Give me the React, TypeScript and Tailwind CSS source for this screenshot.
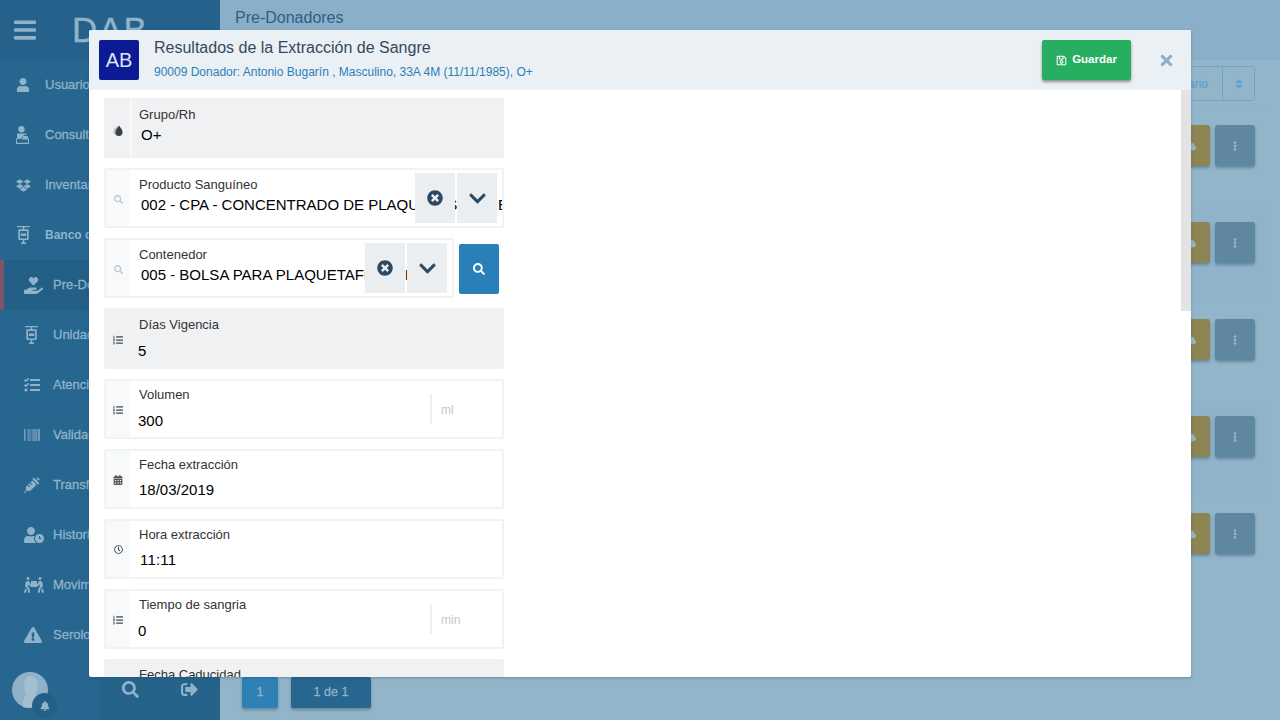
import type { ReactNode } from 'react'
import {
  FaBars, FaUser, FaDropbox, FaHandHoldingHeart, FaTasks, FaBarcode, FaSyringe, FaUserClock,
  FaPeopleCarry, FaExclamationTriangle, FaSearch, FaSignOutAlt, FaBell, FaRegSave, FaTimes,
  FaTimesCircle, FaChevronDown, FaListOl, FaCalendarAlt, FaRegClock, FaSort, FaEllipsisV, FaCloud,
} from 'react-icons/fa'

function IvBag() {
  return (
    <svg className="ml-[1px]" width="13" height="18" viewBox="0 0 13 18" fill="currentColor" aria-hidden="true">
      <path fillRule="evenodd" d="M0 0h13v1.300H7.300v2h3.200c.8 0 1.200.5 1.200 1.200v8.300c0 .7-.4 1.200-1.200 1.200H7.300v2.500H9V18H4v-1.500h1.700V14H2.500c-.8 0-1.200-.5-1.200-1.200V4.500c0-.7.4-1.200 1.200-1.200h3.200v-2H0zM3 5v7.500h7V5zM3.800 7.500h5.400v2.500H3.800z" />
    </svg>
  )
}

function PatientIcon() {
  return (
    <svg width="13" height="18" viewBox="0 0 13 18" fill="currentColor" aria-hidden="true">
      <circle cx="5.500" cy="3.200" r="3.200" />
      <path d="M1.500 7.500h8c.8 0 1.500.5 1.500 1.200H8.500L5.500 11.500v1.500H1V9c0-.8.200-1.500.5-1.500z" />
      <path fillRule="evenodd" d="M0 12.500h1v4.300h11v-4h1V18H0z" />
      <path d="M7 10h4.500l1 3.500H6z" />
    </svg>
  )
}

function BloodDrop() {
  return (
    <svg width="11" height="12" viewBox="0 0 11 12" aria-hidden="true">
      <circle cx="5" cy="6.500" r="4.500" fill="#b9bdc0" />
      <path d="M6 .5c1.200 2 3.500 4.300 3.500 6.800A3.500 3.500 0 0 1 6 11a3.500 3.500 0 0 1-3.500-3.700C2.500 4.800 4.800 2.500 6 .5z" fill="#3a4045" />
    </svg>
  )
}

function Avatar() {
  return (
    <svg width="36" height="36" viewBox="0 0 36 36" aria-hidden="true">
      <circle cx="18" cy="18" r="18" fill="#8fb2c9" />
      <path d="M12 14c0-6 3-10 7-10s7 4 7 10c0 4-2 6-3 8 1 2 3 3 5 4v4a18 18 0 0 1-17 5c0-6 1-11 4-13-2-2-3-5-3-8z" fill="#a3c0d3" />
    </svg>
  )
}

const menu = [
  { icon: <FaUser size={14} />, label: 'Usuarios' },
  { icon: <PatientIcon />, label: 'Consultas' },
  { icon: <FaDropbox size={15} />, label: 'Inventario' },
  { icon: <IvBag />, label: 'Banco de Sangre', bold: true },
  { icon: <FaHandHoldingHeart size={19} />, label: 'Pre-Donadores', sub: true, active: true },
  { icon: <IvBag />, label: 'Unidades', sub: true },
  { icon: <FaTasks size={16} />, label: 'Atención', sub: true },
  { icon: <FaBarcode size={16} />, label: 'Validación', sub: true },
  { icon: <FaSyringe size={16} />, label: 'Transfusión', sub: true },
  { icon: <FaUserClock size={20} />, label: 'Historial', sub: true },
  { icon: <FaPeopleCarry size={20} />, label: 'Movimientos', sub: true },
  { icon: <FaExclamationTriangle size={18} />, label: 'Serología', sub: true },
]

function Sidebar() {
  return (
    <aside className="flex h-full w-[220px] shrink-0 flex-col bg-[#26668f] text-[#8fb3ca]">
      <div className="flex h-[60px] items-center bg-[#25618a] pl-[14px]">
        <FaBars size={22} className="h-[26px] w-[22px]" />
        <span className="ml-[36px] mt-[-2px] text-[35px] font-normal leading-none tracking-[1.5px] [-webkit-text-stroke:0.4px]">DAB</span>
      </div>

      <nav className="flex flex-1 flex-col">
        {menu.map((m) => (
          <div
            key={m.label}
            className={
              m.active
                ? 'flex h-[50px] items-center border-l-4 border-[#7e5568] bg-[#245f85] pl-[20px]'
                : m.sub
                  ? 'flex h-[50px] items-center pl-[24px]'
                  : 'flex h-[50px] items-center pl-[16px]'
            }
          >
            <span className="flex w-[29px] justify-start">{m.icon}</span>
            <span className={m.bold ? 'text-[12px] font-bold' : 'text-[13px] [-webkit-text-stroke:0.3px]'}>{m.label}</span>
          </div>
        ))}
      </nav>

      <div className="relative flex h-[60px] items-center bg-[#25638b]">
        <div className="flex h-full w-[100px] items-center bg-[#26668f] pl-[12px]">
          <Avatar />
        </div>
        <span className="absolute left-[32px] top-[33px] flex h-[25px] w-[25px] items-center justify-center rounded-full bg-[#245f88]">
          <FaBell size={10} />
        </span>
        <FaSearch size={17} className="ml-[22px] mt-[-1px]" />
        <FaSignOutAlt size={17} className="ml-[42px] mt-[-1px]" />
      </div>
    </aside>
  )
}

function Row({ shaded }: { shaded?: boolean }) {
  return (
    <div className={shaded ? 'flex h-[97px] justify-end bg-[#90b3c9] pr-[15px] pt-[15px]' : 'flex h-[97px] justify-end pr-[15px] pt-[15px]'}>
      <div className="flex gap-[5px]">
        <button className="flex h-[41px] w-[40px] items-center justify-center rounded-[3px] bg-[#8c8452] text-[#93b5ca] shadow-[0_2px_3px_rgba(30,70,100,0.4)]">
          <FaCloud size={12} />
        </button>
        <button className="flex h-[41px] w-[40px] items-center justify-center rounded-[3px] bg-[#5f879f] text-[#93b5ca] shadow-[0_2px_3px_rgba(30,70,100,0.4)]">
          <FaEllipsisV size={10} />
        </button>
      </div>
    </div>
  )
}

function Main() {
  return (
    <main className="flex h-full flex-1 flex-col bg-[#93b5ca]">
      <div className="h-[60px] bg-[#8aafc8] pl-[15px] pt-[8px] text-[16px] leading-[19px] text-[#2c5f83]">Pre-Donadores</div>
      <div className="mr-[15px] flex h-[50px] justify-end border-b border-[#8fb1c7] pr-[10px] pt-[6px]">
        <div className="flex h-[35px] items-center rounded-[3px] border border-[#6ea5d0] text-[12px] text-[#639fcf]">
          <span className="px-[14px] [-webkit-text-stroke:0.2px]">Usuario</span>
          <span className="flex h-full w-[32px] items-center justify-center border-l border-[#6ea5d0]">
            <FaSort size={12} />
          </span>
        </div>
      </div>
      <div className="flex flex-1 flex-col pr-[10px]">
        <Row />
        <Row shaded />
        <Row />
        <Row shaded />
        <Row />
      </div>
      <div className="flex h-[43px] gap-[13px] pl-[22px]">
        <button className="h-[31px] w-[36px] rounded-[2px] bg-[#2e80b5] text-[12.5px] text-[#8fb3ca] shadow-[0_2px_3px_rgba(30,70,100,0.4)] [-webkit-text-stroke:0.3px]">1</button>
        <button className="h-[31px] w-[80px] rounded-[2px] bg-[#26668f] text-[12.5px] text-[#8fb3ca] shadow-[0_2px_3px_rgba(30,70,100,0.4)] [-webkit-text-stroke:0.3px]">1 de 1</button>
      </div>
    </main>
  )
}

type FieldProps = {
  icon: ReactNode
  label: string
  value: string
  valueClass: string
  grey?: boolean
  divider?: boolean
  suffix?: string
  selectAt?: boolean
  narrow?: boolean
  tall?: boolean
  tight?: boolean
}

function Field({ icon, label, value, valueClass, grey, divider, suffix, selectAt, narrow, tall, tight }: FieldProps) {
  const size = `${narrow ? 'w-[350px]' : 'w-[400px]'} ${tall ? 'h-[61px]' : 'h-[60px]'}`
  const tone = grey ? 'border-[#f0f1f3] bg-[#f0f1f3]' : 'border-[#f0f3f3] bg-white'
  const iconPad = divider ? 'pt-[6px]' : tight ? 'pt-[1px]' : 'pt-[3px]'
  return (
    <div className={`relative flex shrink-0 overflow-hidden rounded-[2px] border-2 ${size} ${tone}`}>
      <div
        className={
          grey
            ? divider
              ? `flex w-[26px] shrink-0 items-center justify-center border-r-2 border-[#f8f9fa] text-[#3a4750] ${iconPad}`
              : `flex w-[24px] shrink-0 items-center justify-center text-[#3a4750] ${iconPad}`
            : `flex w-[24px] shrink-0 items-center justify-center bg-[#f8f9fa] text-[#3a4750] ${iconPad}`
        }
      >
        {icon}
      </div>
      <div className={`min-w-0 flex-1 ${divider ? 'pl-[7px]' : 'pl-[9px]'} ${tight ? 'pt-[6px]' : 'pt-[7px]'}`}>
        <div className="text-[13px] leading-[16px] text-[#333]">{label}</div>
        <div className={`whitespace-nowrap text-[15px] leading-[18px] text-black ${valueClass}`}>{value}</div>
      </div>
      {suffix && (
        <div className="mt-[13px] h-[30px] w-[72px] shrink-0 border-l-2 border-[#eef0f0] pl-[9px] text-[12px] leading-[32px] text-[#c4c8cc]">
          {suffix}
        </div>
      )}
      {selectAt && (
        <div className="absolute right-[5px] top-[3px] flex gap-[2px] text-[#2c4a63]">
          <span className="flex h-[50px] w-[40px] items-center justify-center bg-[#ebeef0]">
            <FaTimesCircle size={16} />
          </span>
          <span className="flex h-[50px] w-[40px] items-center justify-center bg-[#ebeef0]">
            <FaChevronDown size={19} />
          </span>
        </div>
      )}
    </div>
  )
}

function Modal() {
  return (
    <div className="absolute left-[89px] top-[30px] flex h-[647px] w-[1102px] flex-col overflow-hidden rounded-[2px] bg-white shadow-[0_1px_3px_rgba(30,70,100,0.35)]">
      <header className="flex h-[60px] shrink-0 items-center bg-[#ebf0f4] pl-[10px] pr-[15px]">
        <div className="flex h-[40px] w-[40px] items-center justify-center rounded-[2px] bg-[#0c1a94] text-[20px] text-[#dfe4f5]">AB</div>
        <div className="ml-[15px] flex-1">
          <div className="mt-[-4px] text-[16px] leading-[20px] text-[#34495e]">Resultados de la Extracción de Sangre</div>
          <div className="mt-[7px] text-[12px] leading-[14px] text-[#2980b9]">90009 Donador: Antonio Bugarín , Masculino, 33A 4M (11/11/1985), O+</div>
        </div>
        <button className="flex h-[40px] w-[89px] items-center justify-center gap-[5px] rounded-[2px] bg-[#27ae60] text-[11.5px] font-bold text-white shadow-[0_2px_3px_rgba(0,0,0,0.4)]">
          <FaRegSave size={11} />
          Guardar
        </button>
        <FaTimes size={17} className="ml-[27px] mr-[1px] text-[#8fb0c8]" />
      </header>

      <div className="relative flex-1 overflow-hidden pl-[15px] pt-[8px]">
        <div className="absolute right-0 top-0 h-[221px] w-[10px] bg-[#e3e3e3]" />
        <div className="flex flex-col gap-[10px]">
          <Field icon={<BloodDrop />} label="Grupo/Rh" value="O+" valueClass="mt-[3px] pl-[2px]" grey divider />
          <Field
            icon={<FaSearch size={9} className="text-[#c5c9cc]" />}
            label="Producto Sanguíneo"
            value="002 - CPA - CONCENTRADO DE PLAQUETAS POR ESTÁNDAR"
            valueClass="mt-[3px] pl-[2px]"
            selectAt
          />
          <div className="flex gap-[5px]">
            <Field
              icon={<FaSearch size={9} className="text-[#c5c9cc]" />}
              label="Contenedor"
              value="005 - BOLSA PARA PLAQUETAFÉRESIS"
              valueClass="mt-[3px] pl-[2px]"
              selectAt
              narrow
            />
            <button className="mt-[6px] flex h-[50px] w-[40px] items-center justify-center rounded-[2px] bg-[#2980b9] text-white">
              <FaSearch size={12} />
            </button>
          </div>
          <Field icon={<FaListOl size={10} />} label="Días Vigencia" value="5" valueClass="mt-[9px] ml-[-1px]" grey tall />
          <Field icon={<FaListOl size={10} />} label="Volumen" value="300" valueClass="mt-[9px] ml-[-1px]" suffix="ml" tight />
          <Field icon={<FaCalendarAlt size={10} className="text-[#555]" />} label="Fecha extracción" value="18/03/2019" valueClass="mt-[8px]" tight />
          <Field icon={<FaRegClock size={9} />} label="Hora extracción" value="11:11" valueClass="mt-[8px] pl-[1px] tracking-[0.2px]" tight />
          <Field icon={<FaListOl size={10} />} label="Tiempo de sangria" value="0" valueClass="mt-[9px] ml-[-1px]" suffix="min" tight />
          <Field icon={<FaCalendarAlt size={10} />} label="Fecha Caducidad" value="" valueClass="mt-[8px]" grey tight />
        </div>
      </div>
    </div>
  )
}

export default function App() {
  return (
    <div className="relative flex h-[720px] w-[1280px] overflow-hidden font-['Liberation_Sans',Arial,sans-serif]">
      <Sidebar />
      <Main />
      <Modal />
    </div>
  )
}
